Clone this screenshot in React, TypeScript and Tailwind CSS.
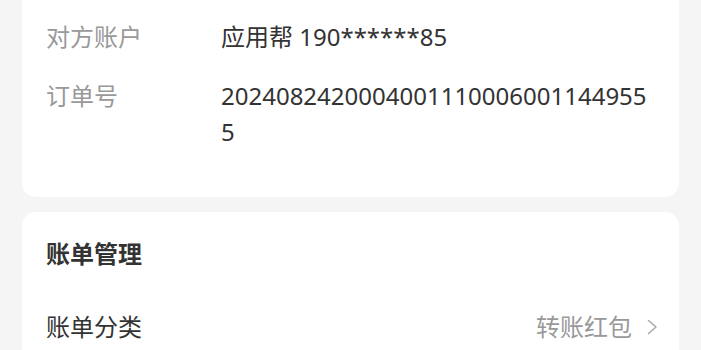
const rows = [
  { label: '对方账户', value: '应用帮 190******85' },
  { label: '订单号', value: '20240824200040011100060011449555' },
];

export default function App() {
  return (
    <div
      className="min-h-[350px] w-[701px] overflow-hidden bg-[#f5f5f5] px-[22px]"
      style={{ fontFamily: '"Noto Sans", "Noto Sans CJK SC", sans-serif' }}
    >
      {/* 详情卡片 */}
      <div className="rounded-b-[14px] bg-white pb-[47px] pl-[24px] pr-[23px] pt-[19px]">
        <div className="flex flex-col gap-[23px]">
          {rows.map((row) => (
            <div key={row.label} className="flex text-[24px] leading-[36px]">
              <div className="w-[175px] shrink-0 text-[#999999]">{row.label}</div>
              <div className="w-[434px] break-all text-[#333333]">{row.value}</div>
            </div>
          ))}
        </div>
      </div>

      {/* 账单管理 */}
      <div className="mt-[15px] rounded-[14px] bg-white pl-[24px] pr-[21px] pt-[24px] pb-[20px]">
        <div className="text-[24px] font-bold leading-[36px] text-[#333333]">账单管理</div>
        <div className="mt-[37px] flex items-center justify-between text-[24px] leading-[36px]">
          <span className="text-[#333333]">账单分类</span>
          <span className="flex items-center gap-[15px] text-[#999999]">
            转账红包
            <svg width="11" height="16" viewBox="0 0 11 16" fill="none">
              <path d="M1.5 1.5 L9 8 L1.5 14.5" stroke="#aaaaaa" strokeWidth="1.6" strokeLinecap="round" strokeLinejoin="round" />
            </svg>
          </span>
        </div>
      </div>
    </div>
  );
}
